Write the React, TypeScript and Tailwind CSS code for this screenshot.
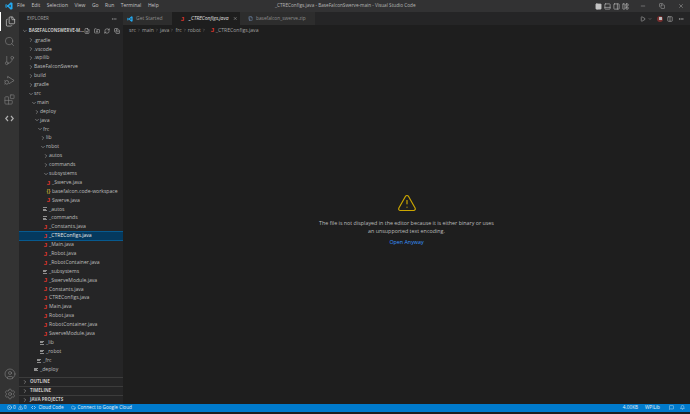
import { ChevronDown, ChevronRight, Cloud, Copy, Ellipsis, Files, MessageSquare, Minus, Play, RefreshCw, Search, Settings, TriangleAlert, X, CircleUser, GitBranch, Blocks, FilePlus, FolderPlus, CopyMinus, CircleX, Bell, Columns2, PanelLeft, PanelBottom, PanelRight, LayoutPanelLeft, FileArchive } from "lucide-react";

type Kind = "open" | "closed" | "java" | "json" | "lines";
type Row = { name: string; depth: number; kind: Kind; active?: boolean };

const ROWS: Row[] = [
    { name: ".gradle", depth: 0, kind: "closed" },
    { name: ".vscode", depth: 0, kind: "closed" },
    { name: ".wpilib", depth: 0, kind: "closed" },
    { name: "BaseFalconSwerve", depth: 0, kind: "closed" },
    { name: "build", depth: 0, kind: "closed" },
    { name: "gradle", depth: 0, kind: "closed" },
    { name: "src", depth: 0, kind: "open" },
    { name: "main", depth: 1, kind: "open" },
    { name: "deploy", depth: 2, kind: "closed" },
    { name: "java", depth: 2, kind: "open" },
    { name: "frc", depth: 3, kind: "open" },
    { name: "lib", depth: 4, kind: "closed" },
    { name: "robot", depth: 4, kind: "open" },
    { name: "autos", depth: 5, kind: "closed" },
    { name: "commands", depth: 5, kind: "closed" },
    { name: "subsystems", depth: 5, kind: "open" },
    { name: "_Swerve.java", depth: 6, kind: "java" },
    { name: "basefalcon.code-workspace", depth: 6, kind: "json" },
    { name: "Swerve.java", depth: 6, kind: "java" },
    { name: "_autos", depth: 5, kind: "lines" },
    { name: "_commands", depth: 5, kind: "lines" },
    { name: "_Constants.java", depth: 5, kind: "java" },
    { name: "_CTREConfigs.java", depth: 5, kind: "java", active: true },
    { name: "_Main.java", depth: 5, kind: "java" },
    { name: "_Robot.java", depth: 5, kind: "java" },
    { name: "_RobotContainer.java", depth: 5, kind: "java" },
    { name: "_subsystems", depth: 5, kind: "lines" },
    { name: "_SwerveModule.java", depth: 5, kind: "java" },
    { name: "Constants.java", depth: 5, kind: "java" },
    { name: "CTREConfigs.java", depth: 5, kind: "java" },
    { name: "Main.java", depth: 5, kind: "java" },
    { name: "Robot.java", depth: 5, kind: "java" },
    { name: "RobotContainer.java", depth: 5, kind: "java" },
    { name: "SwerveModule.java", depth: 5, kind: "java" },
    { name: "_lib", depth: 4, kind: "lines" },
    { name: "_robot", depth: 4, kind: "lines" },
    { name: "_frc", depth: 3, kind: "lines" },
    { name: "_deploy", depth: 2, kind: "lines" },
];

const INDENT = ["pl-[9px]", "pl-[12px]", "pl-[15px]", "pl-[18px]", "pl-[21px]", "pl-[24px]", "pl-[27px]"];
const MENU = ["File", "Edit", "Selection", "View", "Go", "Run", "Terminal", "Help"];

function VsLogo({ size = 8 }: { size?: number }) {
    return (
        <svg width={size} height={size} viewBox="0 0 24 24" fill="#23a9f1">
            <path d="M17.5 1 8 10 3.5 6.5 1.5 7.5v9l2 1L8 14l9.5 9 5-2.2V3.2zM4 14.8V9.2L6.8 12zM17 16.2 11.7 12 17 7.8z" />
        </svg>
    );
}

function JavaIcon() {
    return <span className="w-[5px] shrink-0 text-center font-['Liberation_Sans',sans-serif] text-[6px] leading-none font-bold text-[#e0362c]">J</span>;
}

function RowIcon({ kind }: { kind: Kind }) {
    if (kind === "java") return <JavaIcon />;
    if (kind === "json") return <span className="w-[5px] shrink-0 text-center text-[5px] leading-none font-bold text-[#c4a72f]">{"{}"}</span>;
    if (kind === "lines") {
        return (
            <span className="flex w-[5px] shrink-0 flex-col gap-[0.7px]">
                <span className="h-[0.8px] w-[3.5px] bg-[#8f8f8f]" />
                <span className="h-[0.8px] w-[2.5px] bg-[#8f8f8f]" />
                <span className="h-[0.8px] w-[3.5px] bg-[#8f8f8f]" />
            </span>
        );
    }
    const Chevron = kind === "open" ? ChevronDown : ChevronRight;
    return <Chevron size={6} strokeWidth={1.8} className="-mx-[0.5px] shrink-0 text-[#c5c5c5]" />;
}

function TreeRow({ row }: { row: Row }) {
    return (
        <div className={`flex h-[8.9px] items-center gap-[1px] ${INDENT[row.depth]} ${row.active ? "bg-[#04395e] outline outline-[0.5px] -outline-offset-[0.5px] outline-[#075a8f]" : ""}`}>
            <RowIcon kind={row.kind} />
            <span className={`whitespace-nowrap ${row.active ? "text-[#e6e6e6]" : "text-[#bdbdbd]"}`}>{row.name}</span>
        </div>
    );
}

function Section({ title }: { title: string }) {
    return (
        <div className="flex h-[9px] items-center gap-[2px] border-t border-[#3c3c3c] pl-[3px] text-[4.5px] font-bold text-[#c5c5c5]">
            <ChevronRight size={6} strokeWidth={1.8} />
            <span>{title}</span>
        </div>
    );
}

export default function App() {
    return (
        <div className="flex h-[414px] w-[690px] flex-col overflow-hidden bg-[#1e1e1e] font-['Open_Sans',sans-serif] text-[5.1px] text-[#cccccc]">
            {/* title bar */}
            <div className="relative flex h-[12px] shrink-0 items-center bg-[#323233]">
                <div className="flex w-[17px] justify-center"><VsLogo /></div>
                <div className="flex gap-[6.5px] text-[5px] text-[#c4c4c4]">
                    {MENU.map((m) => <span key={m}>{m}</span>)}
                </div>
                <span className="absolute left-[275px] text-[4.7px] text-[#b5b5b5]">_CTREConfigs.java - BaseFalconSwerve-main - Visual Studio Code</span>
                <div className="ml-auto flex items-center gap-[2px] text-[#c4c4c4]">
                    <PanelLeft size={7} fill="#c4c4c4" />
                    <PanelBottom size={7} />
                    <PanelRight size={7} />
                    <LayoutPanelLeft size={7} />
                </div>
                <div className="ml-[11px] mr-[6px] flex items-center gap-[13px] text-[#a8a8a8]">
                    <Minus size={6} />
                    <Copy size={6} />
                    <X size={6} />
                </div>
            </div>

            <div className="flex min-h-0 flex-1">
                {/* activity bar */}
                <div className="flex w-[19px] shrink-0 flex-col items-center bg-[#333333] text-[#858585]">
                    <div className="flex h-[19px] w-full items-center justify-center border-l border-white text-[#e6e6e6]"><Files size={11} strokeWidth={1.3} /></div>
                    <div className="flex h-[20px] items-center"><Search size={11} strokeWidth={1.3} /></div>
                    <div className="flex h-[19px] items-center"><GitBranch size={11} strokeWidth={1.3} /></div>
                    <div className="flex h-[20px] items-center">
                        <svg width="11" height="11" viewBox="0 0 24 24" fill="none" stroke="currentColor" strokeWidth="1.5"><path d="M8 7V3l14 9-11 7" /><circle cx="6" cy="16" r="4" /><path d="M1 12l2 1.5M1 20l2-1.5" /></svg>
                    </div>
                    <div className="flex h-[19px] items-center"><Blocks size={11} strokeWidth={1.3} /></div>
                    <div className="flex h-[19px] items-center">
                        <svg width="9" height="7" viewBox="0 0 18 14" fill="none" stroke="#b0b0b0" strokeWidth="2.4"><path d="M6 2 1.5 7 6 12M12 2l4.5 5L12 12" /></svg>
                    </div>
                    <div className="mt-auto flex h-[20px] items-center"><CircleUser size={12} strokeWidth={1.2} /></div>
                    <div className="flex h-[20px] items-center"><Settings size={12} strokeWidth={1.2} /></div>
                </div>

                {/* sidebar */}
                <div className="flex w-[104px] shrink-0 flex-col bg-[#252526]">
                    <div className="flex h-[13px] shrink-0 items-center justify-between pl-[8px] pr-[6px] text-[4.5px] text-[#a0a0a0]">
                        <span>EXPLORER</span>
                        <Ellipsis size={6} />
                    </div>
                    <div className="flex h-[11px] shrink-0 items-center pl-[3px] text-[4.4px] font-bold text-[#c5c5c5]">
                        <ChevronDown size={6} strokeWidth={1.8} />
                        <span className="ml-[1px] whitespace-nowrap">BASEFALCONSWERVE-M...</span>
                        <div className="ml-auto mr-[3px] flex gap-[4px]">
                            <FilePlus size={6} />
                            <FolderPlus size={6} />
                            <RefreshCw size={6} />
                            <CopyMinus size={6} />
                        </div>
                    </div>
                    <div className="min-h-0 flex-1 overflow-hidden">
                        {ROWS.map((r) => <TreeRow key={r.name} row={r} />)}
                    </div>
                    <Section title="OUTLINE" />
                    <Section title="TIMELINE" />
                    <Section title="JAVA PROJECTS" />
                </div>

                {/* editor */}
                <div className="flex min-w-0 flex-1 flex-col">
                    <div className="flex h-[13px] shrink-0 items-stretch bg-[#252526] text-[5px]">
                        <div className="flex w-[49px] items-center gap-[3px] bg-[#2d2d2d] pl-[4px] text-[#8f8f8f]"><VsLogo size={6} /><span>Get Started</span></div>
                        <div className="flex w-[68px] items-center gap-[4px] bg-[#1e1e1e] pl-[8px] text-[#e0e0e0]">
                            <JavaIcon />
                            <span className="italic">_CTREConfigs.java</span>
                            <X size={5} className="ml-auto mr-[3px] text-[#d0d0d0]" />
                        </div>
                        <div className="flex w-[75px] items-center gap-[3px] bg-[#2d2d2d] pl-[8px] text-[4.8px] text-[#8f8f8f]">
                            <FileArchive size={5} className="text-[#7d9ac0]" />
                            <span>basefalcon_swerve.zip</span>
                        </div>
                        <div className="ml-auto flex items-center pr-[6px] text-[#c0c0c0]">
                            <Play size={6} />
                            <ChevronDown size={4} className="ml-[2px]" />
                            <span className="ml-[5px] flex h-[6px] w-[6px] items-center justify-center rounded-full bg-[#7a2f2f]"><span className="h-[3px] w-[3px] bg-[#bdbdbd]" /></span>
                            <Columns2 size={6} className="ml-[4px]" />
                            <Ellipsis size={6} className="ml-[5px]" />
                        </div>
                    </div>
                    <div className="flex h-[11px] shrink-0 items-center gap-[1px] pl-[6px] text-[#a0a0a0]">
                        {["src", "main", "java", "frc", "robot"].map((p) => (
                            <span key={p} className="flex items-center gap-[1px]">{p}<ChevronRight size={4} /></span>
                        ))}
                        <span className="ml-[3px] flex items-center gap-[1px]"><JavaIcon />_CTREConfigs.java</span>
                    </div>
                    <div className="flex flex-1 flex-col items-center justify-center text-center text-[5.35px] text-[#bdbdbd]">
                        <TriangleAlert size={20} strokeWidth={1.4} className="text-[#cca700]" />
                        <p className="mt-[6px] w-[178px] leading-[8px]">The file is not displayed in the editor because it is either binary or uses an unsupported text encoding.</p>
                        <span className="mt-[3px] text-[#3794ff]">Open Anyway</span>
                    </div>
                </div>
            </div>

            {/* status bar */}
            <div className="flex h-[8px] shrink-0 items-center bg-[#007acc] pl-[7px] text-[4.7px] text-[#e6f2fa]">
                <CircleX size={5} />
                <span className="ml-[1px]">0</span>
                <TriangleAlert size={5} className="ml-[2px]" />
                <span className="ml-[1px]">0</span>
                <svg width="5" height="5" viewBox="0 0 10 10" fill="none" stroke="currentColor" strokeWidth="1.2" className="ml-[5px]"><path d="M4 2 1 5l3 3M6 2l3 3-3 3" /></svg>
                <span className="ml-[2px]">Cloud Code</span>
                <Cloud size={5} className="ml-[7px]" />
                <span className="ml-[2px]">Connect to Google Cloud</span>
                <span className="ml-auto">4.00KB</span>
                <span className="ml-[7px]">WPILib</span>
                <MessageSquare size={5} className="ml-[9px]" />
                <Bell size={5} className="ml-[6px] mr-[5px]" />
            </div>
            <div className="h-[2.5px] shrink-0 bg-[#1e1e1e]" />
        </div>
    );
}
